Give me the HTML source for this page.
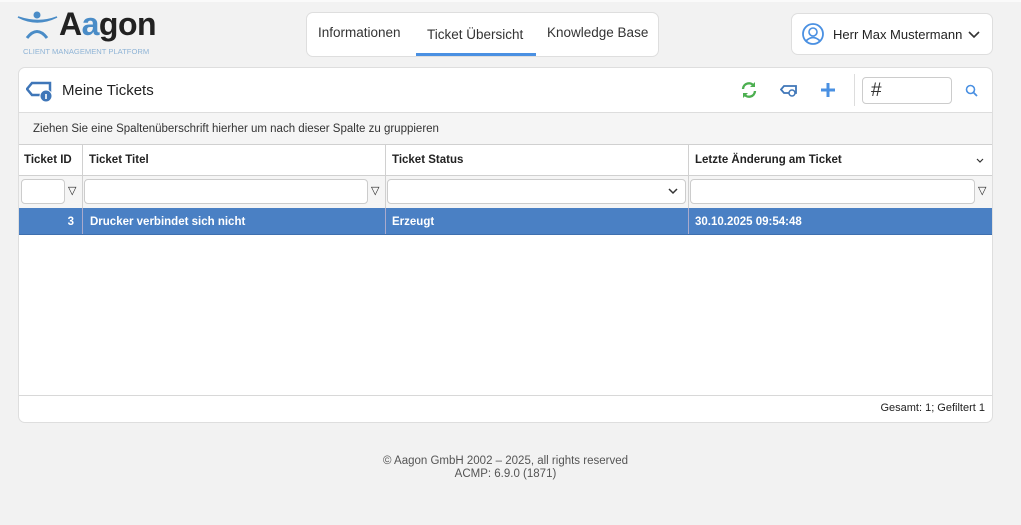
<!DOCTYPE html><html><head><meta charset="utf-8"><style>
*{box-sizing:border-box;margin:0;padding:0}
body{width:1021px;height:525px;background:#f2f2f2;font-family:"Liberation Sans",sans-serif;position:relative;overflow:hidden;color:#222}
.abs{position:absolute}
.box{background:#fff;border:1px solid #dedede;border-radius:7px}
.nav span{position:absolute;top:12px;font-size:13.5px;color:#333}
.tbl{position:absolute;left:19px;width:973px;font-size:11.5px;font-weight:bold}
.c{position:absolute;top:0;bottom:0;border-left:1px solid #d0d0d0;padding-left:6px}
.in{position:absolute;top:3px;height:25px;border:1px solid #ccc;border-radius:4px;background:#fff}
</style></head><body>
<div class="abs" style="left:0;top:0;width:1021px;height:2px;background:#fafafa"></div>
<svg class="abs" style="left:17px;top:11px" width="42" height="32" viewBox="0 0 42 32"><circle cx="20" cy="4" r="3.5" fill="#4a8cc7"/><path d="M1 6 Q20 16 40 6 Q22 13 1 6Z" fill="#4a8cc7" stroke="#4a8cc7" stroke-width="1.5"/><path d="M10 27 Q20 14 30 27" fill="none" stroke="#4a8cc7" stroke-width="3"/></svg>
<div class="abs" style="left:59px;top:6px;font-size:32px;font-weight:bold;color:#222;letter-spacing:-0.5px">A<span style="color:#4a8cc7">a</span>gon</div>
<div class="abs" style="left:23px;top:47px;font-size:7.6px;color:#8fb4d6">CLIENT MANAGEMENT PLATFORM</div>
<div class="box abs nav" style="left:306px;top:12px;width:353px;height:45px">
<span style="left:11px">Informationen</span><span style="left:120px;top:14px">Ticket Übersicht</span><span style="left:240px">Knowledge Base</span>
<div class="abs" style="left:109px;top:40px;width:120px;height:3px;background:#4a90e2"></div></div>
<div class="box abs" style="left:791px;top:13px;width:202px;height:42px">
<svg class="abs" style="left:10px;top:9px" width="22" height="22" viewBox="0 0 22 22"><circle cx="11" cy="11" r="10" fill="none" stroke="#4a90e2" stroke-width="1.8"/><circle cx="11" cy="9" r="4" fill="none" stroke="#4a90e2" stroke-width="1.6"/><path d="M4 18 Q11 11 18 18" fill="none" stroke="#4a90e2" stroke-width="1.6"/></svg>
<span class="abs" style="left:41px;top:13px;font-size:13px">Herr Max Mustermann</span>
<svg class="abs" style="left:176px;top:17px" width="12" height="8"><path d="M1 1 L6 6 L11 1" fill="none" stroke="#333" stroke-width="1.6"/></svg></div>
<div class="box abs" style="left:18px;top:67px;width:975px;height:356px;overflow:hidden">
<svg class="abs" style="left:7px;top:13px" width="28" height="22" viewBox="0 0 28 22"><path d="M6 2 H24 V14 H6 L1 8Z" fill="none" stroke="#3f76b8" stroke-width="2.5"/><circle cx="20" cy="15" r="6" fill="#3f76b8" stroke="#fff" stroke-width="1"/><rect x="19.2" y="13" width="1.6" height="5" fill="#fff"/></svg>
<span class="abs" style="left:43px;top:14px;font-size:15px;color:#222">Meine Tickets</span>
<svg class="abs" style="left:721px;top:13px" width="18" height="18" viewBox="0 0 18 18"><path d="M3 8 A6 6 0 0 1 14 5 M15 10 A6 6 0 0 1 4 13" fill="none" stroke="#4caf50" stroke-width="2.4"/><path d="M15 1 V6 H10Z M3 17 V12 H8Z" fill="#4caf50"/></svg>
<svg class="abs" style="left:761px;top:16px" width="18" height="13" viewBox="0 0 18 13"><path d="M4 2 H16 V9 H4 L1 5.5Z" fill="none" stroke="#3f76b8" stroke-width="1.8"/><circle cx="12" cy="9" r="3" fill="#fff" stroke="#3f76b8" stroke-width="1.5"/></svg>
<svg class="abs" style="left:801px;top:14px" width="16" height="16"><path d="M8 1V15M1 8H15" stroke="#4a90e2" stroke-width="3"/></svg>
<div class="abs" style="left:835px;top:6px;width:1px;height:32px;background:#ddd"></div>
<div class="abs" style="left:843px;top:9px;width:90px;height:27px;border:1px solid #ccc;border-radius:4px;font-size:19px;color:#333;padding:0 0 0 8px;line-height:25px">#</div>
<svg class="abs" style="left:946px;top:16px" width="13" height="13"><circle cx="5.5" cy="5.5" r="4" fill="none" stroke="#4a90e2" stroke-width="1.6"/><path d="M8.5 8.5L12 12" stroke="#4a90e2" stroke-width="1.8"/></svg>
</div>
<div class="tbl" style="top:112px;height:32px;background:#f5f5f5;border-top:1px solid #ddd;font-weight:normal;font-size:11.5px;padding:10px 0 0 14px;color:#333">Ziehen Sie eine Spaltenüberschrift hierher um nach dieser Spalte zu gruppieren</div>
<div class="tbl" style="top:144px;height:32px;background:#fff;border-top:1px solid #d0d0d0;border-bottom:1px solid #d0d0d0;line-height:31px">
<div class="c" style="left:0;border:0;padding-left:5px">Ticket ID</div><div class="c" style="left:63px">Ticket Titel</div><div class="c" style="left:366px">Ticket Status</div><div class="c" style="left:669px;right:0">Letzte Änderung am Ticket<svg class="abs" style="right:8px;top:13px" width="8" height="5"><path d="M1 1L4 4L7 1" fill="none" stroke="#333" stroke-width="1.2"/></svg></div></div>
<div class="tbl" style="top:176px;height:32px;background:#f5f5f5">
<div class="in" style="left:2px;width:44px"></div><span class="abs" style="left:49px;top:8px;font-size:11px;font-weight:normal">▽</span>
<div class="c" style="left:63px;border-color:#d0d0d0"></div><div class="in" style="left:65px;width:284px"></div><span class="abs" style="left:352px;top:8px;font-size:11px;font-weight:normal">▽</span>
<div class="c" style="left:366px"></div><div class="in" style="left:368px;width:299px"></div><svg class="abs" style="left:649px;top:12px" width="10" height="7"><path d="M1 1L5 5L9 1" fill="none" stroke="#333" stroke-width="1.5"/></svg>
<div class="c" style="left:669px"></div><div class="in" style="left:671px;width:285px"></div><span class="abs" style="left:959px;top:8px;font-size:11px;font-weight:normal">▽</span></div>
<div class="tbl" style="top:208px;height:27px;background:#4a80c4;color:#fff;line-height:29px;border-bottom:1px solid #3e6fae">
<div class="c" style="left:0;width:63px;border:0;text-align:right;padding-right:8px">3</div><div class="c" style="left:63px;padding-left:7px;border-color:#aac">Drucker verbindet sich nicht</div><div class="c" style="left:366px;border-color:#aac">Erzeugt</div><div class="c" style="left:669px;border-color:#aac">30.10.2025 09:54:48</div></div>
<div class="tbl" style="top:395px;height:1px;background:#d8d8d8"></div>
<div class="abs" style="left:700px;top:402px;width:285px;text-align:right;font-size:11px;color:#222">Gesamt: 1; Gefiltert 1</div>
<div class="abs" style="left:0;width:1011px;top:455px;text-align:center;font-size:11.5px;color:#555;line-height:13px">© Aagon GmbH 2002 – 2025, all rights reserved<br>ACMP: 6.9.0 (1871)</div>
</body></html>
